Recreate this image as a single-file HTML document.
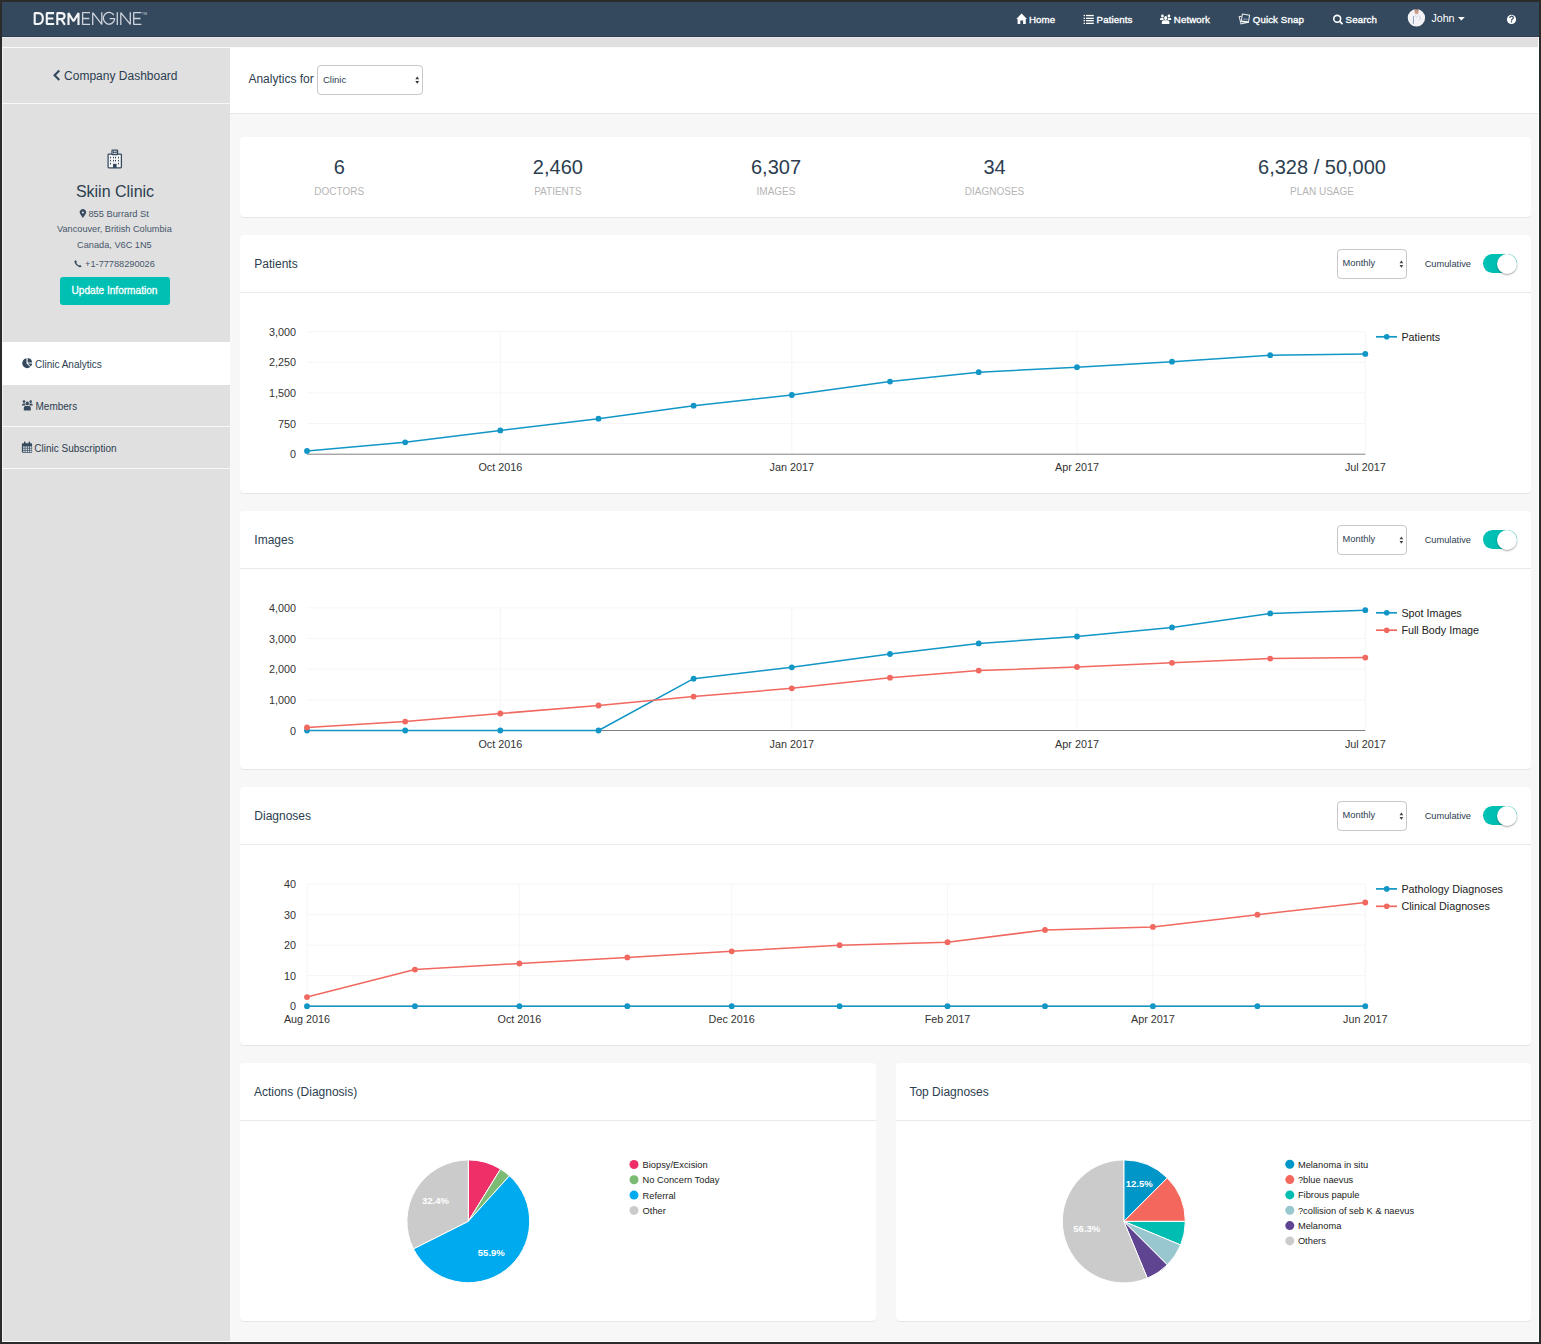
<!DOCTYPE html><html><head><meta charset="utf-8"><style>
*{margin:0;padding:0;box-sizing:border-box}
html,body{width:1541px;height:1344px;overflow:hidden;background:#2b2b2b;font-family:"Liberation Sans",sans-serif}
.t{position:absolute;white-space:nowrap}
.b{position:absolute}
svg{position:absolute;left:0;top:0}
</style></head><body>
<div class="b" style="left:2px;top:2px;width:1537px;height:1340px;background:#f7f7f7;border-right:1px solid #fff;border-bottom:1px solid #fff"></div>
<div class="b" style="left:2px;top:2px;width:1537px;height:35px;background:#34495e;border-bottom:1px solid #2c3e50"></div>
<div class="b" style="left:2px;top:37px;width:1536px;height:10px;background:#e0e0e0;border-top:1px solid #e9e9e9"></div>
<div class="b" style="left:2px;top:47px;width:1536px;height:1px;background:#fafafa"></div>
<div class="b" style="left:2px;top:48px;width:228px;height:1293px;background:#e0e0e0;border-left:1px solid #f0f0f0"></div>
<div class="b" style="left:2px;top:103px;width:228px;height:1px;background:#f8f8f8"></div>
<div class="b" style="left:2px;top:342px;width:228px;height:43px;background:#fff"></div>
<div class="b" style="left:2px;top:426px;width:228px;height:1px;background:#f8f8f8"></div>
<div class="b" style="left:2px;top:468px;width:228px;height:1px;background:#f8f8f8"></div>
<div class="b" style="left:230px;top:48px;width:1308px;height:66px;background:#fff;border-bottom:1px solid #e6e6e6"></div>
<div class="b" style="left:240px;top:137px;width:1291px;height:80px;background:#fff;border-radius:4px;box-shadow:0 1px 0 #e6e6e6"></div>
<div class="b" style="left:240px;top:235px;width:1291px;height:258px;background:#fff;border-radius:4px;box-shadow:0 1px 0 #e6e6e6"></div>
<div class="b" style="left:240px;top:292px;width:1291px;height:1px;background:#e9e9e9"></div>
<div class="b" style="left:240px;top:511px;width:1291px;height:258px;background:#fff;border-radius:4px;box-shadow:0 1px 0 #e6e6e6"></div>
<div class="b" style="left:240px;top:568px;width:1291px;height:1px;background:#e9e9e9"></div>
<div class="b" style="left:240px;top:787px;width:1291px;height:258px;background:#fff;border-radius:4px;box-shadow:0 1px 0 #e6e6e6"></div>
<div class="b" style="left:240px;top:844px;width:1291px;height:1px;background:#e9e9e9"></div>
<div class="b" style="left:240px;top:1063px;width:636px;height:258px;background:#fff;border-radius:4px;box-shadow:0 1px 0 #e6e6e6"></div>
<div class="b" style="left:240px;top:1120px;width:636px;height:1px;background:#e9e9e9"></div>
<div class="b" style="left:896px;top:1063px;width:635px;height:258px;background:#fff;border-radius:4px;box-shadow:0 1px 0 #e6e6e6"></div>
<div class="b" style="left:896px;top:1120px;width:635px;height:1px;background:#e9e9e9"></div>
<div class="t" style="left:248.4px;top:70.84px;font-size:12px;line-height:16.8px;color:#2c3e50;font-weight:normal;">Analytics for</div>
<div class="b" style="left:317px;top:65px;width:106px;height:30px;background:#fff;border:1px solid #c8c8c8;border-radius:4px"></div>
<div class="t" style="left:323px;top:73.26px;font-size:9.5px;line-height:13.3px;color:#2c3e50;font-weight:normal;">Clinic</div>
<div class="t" style="left:39.19999999999999px;width:600px;text-align:center;top:153.07px;font-size:20px;line-height:28.0px;color:#2c3e50;font-weight:normal;">6</div>
<div class="t" style="left:39.19999999999999px;width:600px;text-align:center;top:184.53px;font-size:10px;line-height:14.0px;color:#b5b5b5;font-weight:normal;">DOCTORS</div>
<div class="t" style="left:257.9px;width:600px;text-align:center;top:153.07px;font-size:20px;line-height:28.0px;color:#2c3e50;font-weight:normal;">2,460</div>
<div class="t" style="left:257.9px;width:600px;text-align:center;top:184.53px;font-size:10px;line-height:14.0px;color:#b5b5b5;font-weight:normal;">PATIENTS</div>
<div class="t" style="left:476px;width:600px;text-align:center;top:153.07px;font-size:20px;line-height:28.0px;color:#2c3e50;font-weight:normal;">6,307</div>
<div class="t" style="left:476px;width:600px;text-align:center;top:184.53px;font-size:10px;line-height:14.0px;color:#b5b5b5;font-weight:normal;">IMAGES</div>
<div class="t" style="left:694.5px;width:600px;text-align:center;top:153.07px;font-size:20px;line-height:28.0px;color:#2c3e50;font-weight:normal;">34</div>
<div class="t" style="left:694.5px;width:600px;text-align:center;top:184.53px;font-size:10px;line-height:14.0px;color:#b5b5b5;font-weight:normal;">DIAGNOSES</div>
<div class="t" style="left:1022px;width:600px;text-align:center;top:153.07px;font-size:20px;line-height:28.0px;color:#2c3e50;font-weight:normal;">6,328 / 50,000</div>
<div class="t" style="left:1022px;width:600px;text-align:center;top:184.53px;font-size:10px;line-height:14.0px;color:#b5b5b5;font-weight:normal;">PLAN USAGE</div>
<div class="t" style="left:254.3px;top:256.24px;font-size:12px;line-height:16.8px;color:#2c3e50;font-weight:normal;">Patients</div>
<div class="b" style="left:1337px;top:249px;width:70px;height:30px;background:#fff;border:1px solid #c8c8c8;border-radius:4px"></div>
<div class="t" style="left:1342.6px;top:256.57px;font-size:9.3px;line-height:13.02px;color:#2c3e50;font-weight:normal;">Monthly</div>
<div class="t" style="left:1424.7px;top:258.21px;font-size:9.26px;line-height:12.96px;color:#2c3e50;font-weight:normal;">Cumulative</div>
<div class="b" style="left:1483px;top:254px;width:34px;height:19px;background:#00bfb3;border-radius:10px"></div>
<div class="b" style="left:1497px;top:253.5px;width:20px;height:20.0px;background:#fff;border-radius:50%;box-shadow:0 1px 2px rgba(0,0,0,.35)"></div>
<div class="t" style="left:254.3px;top:532.24px;font-size:12px;line-height:16.8px;color:#2c3e50;font-weight:normal;">Images</div>
<div class="b" style="left:1337px;top:525px;width:70px;height:30px;background:#fff;border:1px solid #c8c8c8;border-radius:4px"></div>
<div class="t" style="left:1342.6px;top:532.57px;font-size:9.3px;line-height:13.02px;color:#2c3e50;font-weight:normal;">Monthly</div>
<div class="t" style="left:1424.7px;top:534.21px;font-size:9.26px;line-height:12.96px;color:#2c3e50;font-weight:normal;">Cumulative</div>
<div class="b" style="left:1483px;top:530px;width:34px;height:19px;background:#00bfb3;border-radius:10px"></div>
<div class="b" style="left:1497px;top:529.5px;width:20px;height:20.0px;background:#fff;border-radius:50%;box-shadow:0 1px 2px rgba(0,0,0,.35)"></div>
<div class="t" style="left:254.3px;top:808.24px;font-size:12px;line-height:16.8px;color:#2c3e50;font-weight:normal;">Diagnoses</div>
<div class="b" style="left:1337px;top:801px;width:70px;height:30px;background:#fff;border:1px solid #c8c8c8;border-radius:4px"></div>
<div class="t" style="left:1342.6px;top:808.57px;font-size:9.3px;line-height:13.02px;color:#2c3e50;font-weight:normal;">Monthly</div>
<div class="t" style="left:1424.7px;top:810.21px;font-size:9.26px;line-height:12.96px;color:#2c3e50;font-weight:normal;">Cumulative</div>
<div class="b" style="left:1483px;top:806px;width:34px;height:19px;background:#00bfb3;border-radius:10px"></div>
<div class="b" style="left:1497px;top:805.5px;width:20px;height:20.0px;background:#fff;border-radius:50%;box-shadow:0 1px 2px rgba(0,0,0,.35)"></div>
<div class="t" style="left:253.9px;top:1084.24px;font-size:12px;line-height:16.8px;color:#2c3e50;font-weight:normal;">Actions (Diagnosis)</div>
<div class="t" style="left:909.4px;top:1084.24px;font-size:12px;line-height:16.8px;color:#2c3e50;font-weight:normal;">Top Diagnoses</div>
<div class="t" style="left:64.1px;top:68.24px;font-size:12px;line-height:16.8px;color:#2c3e50;font-weight:normal;">Company Dashboard</div>
<div class="t" style="left:-185px;width:600px;text-align:center;top:180.66px;font-size:16px;line-height:22.4px;color:#2c3e50;font-weight:normal;">Skiin Clinic</div>
<div class="t" style="left:88.4px;top:207.87px;font-size:9.3px;line-height:13.02px;color:#47566a;font-weight:normal;">855 Burrard St</div>
<div class="t" style="left:-185.6px;width:600px;text-align:center;top:223.17px;font-size:9.2px;line-height:12.88px;color:#47566a;font-weight:normal;">Vancouver, British Columbia</div>
<div class="t" style="left:-185.6px;width:600px;text-align:center;top:239.17px;font-size:9.2px;line-height:12.88px;color:#47566a;font-weight:normal;">Canada, V6C 1N5</div>
<div class="t" style="left:85.1px;top:257.97px;font-size:9.2px;line-height:12.88px;color:#47566a;font-weight:normal;">+1-77788290026</div>
<div class="b" style="left:60px;top:276.5px;width:110px;height:28.0px;background:#00bfb3;border-radius:3px"></div>
<div class="t" style="left:-185.5px;width:600px;text-align:center;top:284.33px;font-size:10.1px;line-height:14.14px;color:#fff;font-weight:normal;-webkit-text-stroke:0.3px #fff">Update Information</div>
<div class="t" style="left:35px;top:357.84px;font-size:10px;line-height:14.0px;color:#2c3e50;font-weight:normal;">Clinic Analytics</div>
<div class="t" style="left:35.5px;top:399.54px;font-size:10px;line-height:14.0px;color:#2c3e50;font-weight:normal;">Members</div>
<div class="t" style="left:34.3px;top:441.54px;font-size:10px;line-height:14.0px;color:#2c3e50;font-weight:normal;">Clinic Subscription</div>
<div class="t" style="left:1028.9px;top:12.85px;font-size:9.7px;line-height:13.58px;color:#fff;font-weight:normal;-webkit-text-stroke:0.35px #fff;letter-spacing:0.1px">Home</div>
<div class="t" style="left:1096.6px;top:12.85px;font-size:9.7px;line-height:13.58px;color:#fff;font-weight:normal;-webkit-text-stroke:0.35px #fff;letter-spacing:0.1px">Patients</div>
<div class="t" style="left:1173.8px;top:12.85px;font-size:9.7px;line-height:13.58px;color:#fff;font-weight:normal;-webkit-text-stroke:0.35px #fff;letter-spacing:0.1px">Network</div>
<div class="t" style="left:1252.8px;top:12.85px;font-size:9.7px;line-height:13.58px;color:#fff;font-weight:normal;-webkit-text-stroke:0.35px #fff;letter-spacing:0.1px">Quick Snap</div>
<div class="t" style="left:1345.6px;top:12.85px;font-size:9.7px;line-height:13.58px;color:#fff;font-weight:normal;-webkit-text-stroke:0.35px #fff;letter-spacing:0.1px">Search</div>
<div class="t" style="left:1431.4px;top:10.70px;font-size:10.7px;line-height:14.98px;color:#fff;font-weight:normal;">John</div>
<svg width="1541" height="1344" viewBox="0 0 1541 1344" font-family="Liberation Sans, sans-serif"><text x="296" y="458.2" font-size="10.8" fill="#333" text-anchor="end">0</text>
<line x1="307.0" y1="423.6" x2="1365.3" y2="423.6" stroke="#f6f6f6" stroke-width="1"/>
<text x="296" y="427.6" font-size="10.8" fill="#333" text-anchor="end">750</text>
<line x1="307.0" y1="392.9" x2="1365.3" y2="392.9" stroke="#f6f6f6" stroke-width="1"/>
<text x="296" y="396.9" font-size="10.8" fill="#333" text-anchor="end">1,500</text>
<line x1="307.0" y1="362.3" x2="1365.3" y2="362.3" stroke="#f6f6f6" stroke-width="1"/>
<text x="296" y="366.3" font-size="10.8" fill="#333" text-anchor="end">2,250</text>
<line x1="307.0" y1="331.7" x2="1365.3" y2="331.7" stroke="#f6f6f6" stroke-width="1"/>
<text x="296" y="335.7" font-size="10.8" fill="#333" text-anchor="end">3,000</text>
<line x1="500.3" y1="331.7" x2="500.3" y2="454.2" stroke="#f6f6f6" stroke-width="1"/>
<line x1="791.8" y1="331.7" x2="791.8" y2="454.2" stroke="#f6f6f6" stroke-width="1"/>
<line x1="1077.0" y1="331.7" x2="1077.0" y2="454.2" stroke="#f6f6f6" stroke-width="1"/>
<line x1="1365.3" y1="331.7" x2="1365.3" y2="454.2" stroke="#f6f6f6" stroke-width="1"/>
<line x1="307.0" y1="454.2" x2="1365.3" y2="454.2" stroke="#808080" stroke-width="1"/>
<text x="500.3" y="471.2" font-size="10.8" fill="#333" text-anchor="middle">Oct 2016</text>
<text x="791.8" y="471.2" font-size="10.8" fill="#333" text-anchor="middle">Jan 2017</text>
<text x="1077.0" y="471.2" font-size="10.8" fill="#333" text-anchor="middle">Apr 2017</text>
<text x="1365.3" y="471.2" font-size="10.8" fill="#333" text-anchor="middle">Jul 2017</text>
<polyline points="307.0,451.0 405.2,442.3 500.3,430.4 598.5,418.7 693.6,405.7 791.8,395.0 890.0,381.6 978.7,372.2 1077.0,367.2 1172.0,361.7 1270.2,355.2 1365.3,353.9" fill="none" stroke="#1196c6" stroke-width="1.5" stroke-linejoin="round"/>
<circle cx="307.0" cy="451.0" r="2.9" fill="#1196c6"/>
<circle cx="405.2" cy="442.3" r="2.9" fill="#1196c6"/>
<circle cx="500.3" cy="430.4" r="2.9" fill="#1196c6"/>
<circle cx="598.5" cy="418.7" r="2.9" fill="#1196c6"/>
<circle cx="693.6" cy="405.7" r="2.9" fill="#1196c6"/>
<circle cx="791.8" cy="395.0" r="2.9" fill="#1196c6"/>
<circle cx="890.0" cy="381.6" r="2.9" fill="#1196c6"/>
<circle cx="978.7" cy="372.2" r="2.9" fill="#1196c6"/>
<circle cx="1077.0" cy="367.2" r="2.9" fill="#1196c6"/>
<circle cx="1172.0" cy="361.7" r="2.9" fill="#1196c6"/>
<circle cx="1270.2" cy="355.2" r="2.9" fill="#1196c6"/>
<circle cx="1365.3" cy="353.9" r="2.9" fill="#1196c6"/>
<line x1="1376" y1="336.8" x2="1397" y2="336.8" stroke="#1196c6" stroke-width="1.7"/>
<circle cx="1386.7" cy="336.8" r="2.8" fill="#1196c6"/>
<text x="1401.4" y="340.8" font-size="10.75" fill="#222">Patients</text>
<text x="296" y="734.5" font-size="10.8" fill="#333" text-anchor="end">0</text>
<line x1="307.0" y1="699.9" x2="1365.3" y2="699.9" stroke="#f6f6f6" stroke-width="1"/>
<text x="296" y="703.9" font-size="10.8" fill="#333" text-anchor="end">1,000</text>
<line x1="307.0" y1="669.2" x2="1365.3" y2="669.2" stroke="#f6f6f6" stroke-width="1"/>
<text x="296" y="673.2" font-size="10.8" fill="#333" text-anchor="end">2,000</text>
<line x1="307.0" y1="638.5" x2="1365.3" y2="638.5" stroke="#f6f6f6" stroke-width="1"/>
<text x="296" y="642.5" font-size="10.8" fill="#333" text-anchor="end">3,000</text>
<line x1="307.0" y1="607.9" x2="1365.3" y2="607.9" stroke="#f6f6f6" stroke-width="1"/>
<text x="296" y="611.9" font-size="10.8" fill="#333" text-anchor="end">4,000</text>
<line x1="500.3" y1="607.9" x2="500.3" y2="730.5" stroke="#f6f6f6" stroke-width="1"/>
<line x1="791.8" y1="607.9" x2="791.8" y2="730.5" stroke="#f6f6f6" stroke-width="1"/>
<line x1="1077.0" y1="607.9" x2="1077.0" y2="730.5" stroke="#f6f6f6" stroke-width="1"/>
<line x1="1365.3" y1="607.9" x2="1365.3" y2="730.5" stroke="#f6f6f6" stroke-width="1"/>
<line x1="307.0" y1="730.5" x2="1365.3" y2="730.5" stroke="#808080" stroke-width="1"/>
<text x="500.3" y="747.5" font-size="10.8" fill="#333" text-anchor="middle">Oct 2016</text>
<text x="791.8" y="747.5" font-size="10.8" fill="#333" text-anchor="middle">Jan 2017</text>
<text x="1077.0" y="747.5" font-size="10.8" fill="#333" text-anchor="middle">Apr 2017</text>
<text x="1365.3" y="747.5" font-size="10.8" fill="#333" text-anchor="middle">Jul 2017</text>
<polyline points="307.0,730.5 405.2,730.5 500.3,730.5 598.5,730.5 693.6,678.7 791.8,667.3 890.0,654.0 978.7,643.4 1077.0,636.5 1172.0,627.4 1270.2,613.4 1365.3,610.2" fill="none" stroke="#1196c6" stroke-width="1.5" stroke-linejoin="round"/>
<circle cx="307.0" cy="730.5" r="2.9" fill="#1196c6"/>
<circle cx="405.2" cy="730.5" r="2.9" fill="#1196c6"/>
<circle cx="500.3" cy="730.5" r="2.9" fill="#1196c6"/>
<circle cx="598.5" cy="730.5" r="2.9" fill="#1196c6"/>
<circle cx="693.6" cy="678.7" r="2.9" fill="#1196c6"/>
<circle cx="791.8" cy="667.3" r="2.9" fill="#1196c6"/>
<circle cx="890.0" cy="654.0" r="2.9" fill="#1196c6"/>
<circle cx="978.7" cy="643.4" r="2.9" fill="#1196c6"/>
<circle cx="1077.0" cy="636.5" r="2.9" fill="#1196c6"/>
<circle cx="1172.0" cy="627.4" r="2.9" fill="#1196c6"/>
<circle cx="1270.2" cy="613.4" r="2.9" fill="#1196c6"/>
<circle cx="1365.3" cy="610.2" r="2.9" fill="#1196c6"/>
<polyline points="307.0,727.5 405.2,721.6 500.3,713.5 598.5,705.5 693.6,696.6 791.8,688.3 890.0,677.7 978.7,670.6 1077.0,667.0 1172.0,662.8 1270.2,658.6 1365.3,657.6" fill="none" stroke="#f0685f" stroke-width="1.5" stroke-linejoin="round"/>
<circle cx="307.0" cy="727.5" r="2.9" fill="#f0685f"/>
<circle cx="405.2" cy="721.6" r="2.9" fill="#f0685f"/>
<circle cx="500.3" cy="713.5" r="2.9" fill="#f0685f"/>
<circle cx="598.5" cy="705.5" r="2.9" fill="#f0685f"/>
<circle cx="693.6" cy="696.6" r="2.9" fill="#f0685f"/>
<circle cx="791.8" cy="688.3" r="2.9" fill="#f0685f"/>
<circle cx="890.0" cy="677.7" r="2.9" fill="#f0685f"/>
<circle cx="978.7" cy="670.6" r="2.9" fill="#f0685f"/>
<circle cx="1077.0" cy="667.0" r="2.9" fill="#f0685f"/>
<circle cx="1172.0" cy="662.8" r="2.9" fill="#f0685f"/>
<circle cx="1270.2" cy="658.6" r="2.9" fill="#f0685f"/>
<circle cx="1365.3" cy="657.6" r="2.9" fill="#f0685f"/>
<line x1="1376" y1="612.8" x2="1397" y2="612.8" stroke="#1196c6" stroke-width="1.7"/>
<circle cx="1386.7" cy="612.8" r="2.8" fill="#1196c6"/>
<text x="1401.4" y="616.8" font-size="10.75" fill="#222">Spot Images</text>
<line x1="1376" y1="630.2" x2="1397" y2="630.2" stroke="#f0685f" stroke-width="1.7"/>
<circle cx="1386.7" cy="630.2" r="2.8" fill="#f0685f"/>
<text x="1401.4" y="634.2" font-size="10.75" fill="#222">Full Body Image</text>
<text x="296" y="1010.2" font-size="10.8" fill="#333" text-anchor="end">0</text>
<line x1="307.0" y1="975.7" x2="1365.3" y2="975.7" stroke="#f6f6f6" stroke-width="1"/>
<text x="296" y="979.7" font-size="10.8" fill="#333" text-anchor="end">10</text>
<line x1="307.0" y1="945.2" x2="1365.3" y2="945.2" stroke="#f6f6f6" stroke-width="1"/>
<text x="296" y="949.2" font-size="10.8" fill="#333" text-anchor="end">20</text>
<line x1="307.0" y1="914.7" x2="1365.3" y2="914.7" stroke="#f6f6f6" stroke-width="1"/>
<text x="296" y="918.7" font-size="10.8" fill="#333" text-anchor="end">30</text>
<line x1="307.0" y1="884.2" x2="1365.3" y2="884.2" stroke="#f6f6f6" stroke-width="1"/>
<text x="296" y="888.2" font-size="10.8" fill="#333" text-anchor="end">40</text>
<line x1="307.0" y1="884.2" x2="307.0" y2="1006.2" stroke="#f6f6f6" stroke-width="1"/>
<line x1="519.4" y1="884.2" x2="519.4" y2="1006.2" stroke="#f6f6f6" stroke-width="1"/>
<line x1="731.7" y1="884.2" x2="731.7" y2="1006.2" stroke="#f6f6f6" stroke-width="1"/>
<line x1="947.5" y1="884.2" x2="947.5" y2="1006.2" stroke="#f6f6f6" stroke-width="1"/>
<line x1="1152.9" y1="884.2" x2="1152.9" y2="1006.2" stroke="#f6f6f6" stroke-width="1"/>
<line x1="1365.3" y1="884.2" x2="1365.3" y2="1006.2" stroke="#f6f6f6" stroke-width="1"/>
<line x1="307.0" y1="1006.2" x2="1365.3" y2="1006.2" stroke="#808080" stroke-width="1"/>
<text x="307.0" y="1023.2" font-size="10.8" fill="#333" text-anchor="middle">Aug 2016</text>
<text x="519.4" y="1023.2" font-size="10.8" fill="#333" text-anchor="middle">Oct 2016</text>
<text x="731.7" y="1023.2" font-size="10.8" fill="#333" text-anchor="middle">Dec 2016</text>
<text x="947.5" y="1023.2" font-size="10.8" fill="#333" text-anchor="middle">Feb 2017</text>
<text x="1152.9" y="1023.2" font-size="10.8" fill="#333" text-anchor="middle">Apr 2017</text>
<text x="1365.3" y="1023.2" font-size="10.8" fill="#333" text-anchor="middle">Jun 2017</text>
<polyline points="307.0,997.1 414.9,969.6 519.4,963.5 627.3,957.4 731.7,951.3 839.6,945.2 947.5,942.2 1045.0,930.0 1152.9,926.9 1257.4,914.7 1365.3,902.5" fill="none" stroke="#f0685f" stroke-width="1.5" stroke-linejoin="round"/>
<circle cx="307.0" cy="997.1" r="2.9" fill="#f0685f"/>
<circle cx="414.9" cy="969.6" r="2.9" fill="#f0685f"/>
<circle cx="519.4" cy="963.5" r="2.9" fill="#f0685f"/>
<circle cx="627.3" cy="957.4" r="2.9" fill="#f0685f"/>
<circle cx="731.7" cy="951.3" r="2.9" fill="#f0685f"/>
<circle cx="839.6" cy="945.2" r="2.9" fill="#f0685f"/>
<circle cx="947.5" cy="942.2" r="2.9" fill="#f0685f"/>
<circle cx="1045.0" cy="930.0" r="2.9" fill="#f0685f"/>
<circle cx="1152.9" cy="926.9" r="2.9" fill="#f0685f"/>
<circle cx="1257.4" cy="914.7" r="2.9" fill="#f0685f"/>
<circle cx="1365.3" cy="902.5" r="2.9" fill="#f0685f"/>
<polyline points="307.0,1006.2 414.9,1006.2 519.4,1006.2 627.3,1006.2 731.7,1006.2 839.6,1006.2 947.5,1006.2 1045.0,1006.2 1152.9,1006.2 1257.4,1006.2 1365.3,1006.2" fill="none" stroke="#1196c6" stroke-width="1.5" stroke-linejoin="round"/>
<circle cx="307.0" cy="1006.2" r="2.9" fill="#1196c6"/>
<circle cx="414.9" cy="1006.2" r="2.9" fill="#1196c6"/>
<circle cx="519.4" cy="1006.2" r="2.9" fill="#1196c6"/>
<circle cx="627.3" cy="1006.2" r="2.9" fill="#1196c6"/>
<circle cx="731.7" cy="1006.2" r="2.9" fill="#1196c6"/>
<circle cx="839.6" cy="1006.2" r="2.9" fill="#1196c6"/>
<circle cx="947.5" cy="1006.2" r="2.9" fill="#1196c6"/>
<circle cx="1045.0" cy="1006.2" r="2.9" fill="#1196c6"/>
<circle cx="1152.9" cy="1006.2" r="2.9" fill="#1196c6"/>
<circle cx="1257.4" cy="1006.2" r="2.9" fill="#1196c6"/>
<circle cx="1365.3" cy="1006.2" r="2.9" fill="#1196c6"/>
<line x1="1376" y1="888.9" x2="1397" y2="888.9" stroke="#1196c6" stroke-width="1.7"/>
<circle cx="1386.7" cy="888.9" r="2.8" fill="#1196c6"/>
<text x="1401.4" y="892.9" font-size="10.75" fill="#222">Pathology Diagnoses</text>
<line x1="1376" y1="906.3" x2="1397" y2="906.3" stroke="#f0685f" stroke-width="1.7"/>
<circle cx="1386.7" cy="906.3" r="2.8" fill="#f0685f"/>
<text x="1401.4" y="910.3" font-size="10.75" fill="#222">Clinical Diagnoses</text>
<path d="M468.3,1221.3 L468.30,1159.90 A61.4,61.4 0 0 1 500.55,1169.05 Z" fill="#ee2f68" stroke="#fff" stroke-width="1" stroke-linejoin="round"/>
<path d="M468.3,1221.3 L500.55,1169.05 A61.4,61.4 0 0 1 509.48,1175.76 Z" fill="#7cbb74" stroke="#fff" stroke-width="1" stroke-linejoin="round"/>
<path d="M468.3,1221.3 L509.48,1175.76 A61.4,61.4 0 1 1 413.42,1248.83 Z" fill="#00aaee" stroke="#fff" stroke-width="1" stroke-linejoin="round"/>
<path d="M468.3,1221.3 L413.42,1248.83 A61.4,61.4 0 0 1 468.30,1159.90 Z" fill="#cbcbcb" stroke="#fff" stroke-width="1" stroke-linejoin="round"/>
<text x="435.5" y="1204.3" font-size="9.5" font-weight="bold" fill="#fff" text-anchor="middle">32.4%</text>
<text x="491.3" y="1256" font-size="9.5" font-weight="bold" fill="#fff" text-anchor="middle">55.9%</text>
<circle cx="634" cy="1164.5" r="4.5" fill="#ee2f68"/>
<text x="642.6" y="1167.9" font-size="9.3" fill="#222">Biopsy/Excision</text>
<circle cx="634" cy="1179.8" r="4.5" fill="#7cbb74"/>
<text x="642.6" y="1183.2" font-size="9.3" fill="#222">No Concern Today</text>
<circle cx="634" cy="1195.1" r="4.5" fill="#00aaee"/>
<text x="642.6" y="1198.5" font-size="9.3" fill="#222">Referral</text>
<circle cx="634" cy="1210.4" r="4.5" fill="#cbcbcb"/>
<text x="642.6" y="1213.8" font-size="9.3" fill="#222">Other</text>
<path d="M1123.8,1221.4 L1123.80,1159.90 A61.5,61.5 0 0 1 1167.29,1177.91 Z" fill="#0096c8" stroke="#fff" stroke-width="1" stroke-linejoin="round"/>
<path d="M1123.8,1221.4 L1167.29,1177.91 A61.5,61.5 0 0 1 1185.30,1221.40 Z" fill="#f4675d" stroke="#fff" stroke-width="1" stroke-linejoin="round"/>
<path d="M1123.8,1221.4 L1185.30,1221.40 A61.5,61.5 0 0 1 1180.62,1244.94 Z" fill="#00bdb2" stroke="#fff" stroke-width="1" stroke-linejoin="round"/>
<path d="M1123.8,1221.4 L1180.62,1244.94 A61.5,61.5 0 0 1 1167.29,1264.89 Z" fill="#98c7d0" stroke="#fff" stroke-width="1" stroke-linejoin="round"/>
<path d="M1123.8,1221.4 L1167.29,1264.89 A61.5,61.5 0 0 1 1147.34,1278.22 Z" fill="#5e4491" stroke="#fff" stroke-width="1" stroke-linejoin="round"/>
<path d="M1123.8,1221.4 L1147.34,1278.22 A61.5,61.5 0 1 1 1123.80,1159.90 Z" fill="#cbcbcb" stroke="#fff" stroke-width="1" stroke-linejoin="round"/>
<text x="1139.2" y="1187" font-size="9.5" font-weight="bold" fill="#fff" text-anchor="middle">12.5%</text>
<text x="1086.8" y="1232" font-size="9.5" font-weight="bold" fill="#fff" text-anchor="middle">56.3%</text>
<circle cx="1289.8" cy="1164.3" r="4.5" fill="#0096c8"/>
<text x="1297.9" y="1167.7" font-size="9.3" fill="#222">Melanoma in situ</text>
<circle cx="1289.8" cy="1179.6" r="4.5" fill="#f4675d"/>
<text x="1297.9" y="1183.0" font-size="9.3" fill="#222">?blue naevus</text>
<circle cx="1289.8" cy="1194.9" r="4.5" fill="#00bdb2"/>
<text x="1297.9" y="1198.3" font-size="9.3" fill="#222">Fibrous papule</text>
<circle cx="1289.8" cy="1210.3" r="4.5" fill="#98c7d0"/>
<text x="1297.9" y="1213.7" font-size="9.3" fill="#222">?collision of seb K &amp; naevus</text>
<circle cx="1289.8" cy="1225.6" r="4.5" fill="#5e4491"/>
<text x="1297.9" y="1229.0" font-size="9.3" fill="#222">Melanoma</text>
<circle cx="1289.8" cy="1240.9" r="4.5" fill="#cbcbcb"/>
<text x="1297.9" y="1244.3" font-size="9.3" fill="#222">Others</text>
<g fill="none" stroke="#f4f5f7" stroke-width="2.1" stroke-linejoin="bevel"><path d="M34.7,13.1 H38.4 Q42.8,13.1 42.8,18.6 Q42.8,24 38.4,24 H34.7 Z"/><path d="M54.1,13.1 H46.8 V24 H54.2 M46.8,18.5 H53.4"/><path d="M57.3,25 V13.1 H61.3 Q64.6,13.1 64.6,16.1 Q64.6,19.1 61.3,19.1 H57.3 M61.2,19.1 L64.9,24.9"/><path d="M68.5,25 V13.1 L73.5,21.2 L78.5,13.1 V25"/></g>
<g fill="none" stroke="#cfd4db" stroke-width="1.3" stroke-linejoin="bevel"><path d="M90,12.7 H82.6 V24.4 H90.1 M82.6,18.5 H89.3"/><path d="M92.7,25 V12.7 L101.8,24.4 V12.2"/><path d="M113.9,15.1 A5.7,5.9 0 1 0 114.7,19 V18.7 H109.6"/><path d="M117.3,12.2 V25"/><path d="M120.8,25 V12.7 L130.3,24.4 V12.2"/><path d="M141.3,12.7 H133.7 V24.4 H141.4 M133.7,18.5 H140.6"/></g>
<text x="141.8" y="14.6" font-size="3.6" fill="#c9cfd6">TM</text>
<path d="M1021.6,13.5 L1027,18.9 H1025.8 V24 H1023.1 V20.5 H1020.3 V24 H1017.6 V18.9 H1016.3 Z" fill="#fff"/>
<g fill="#fff"><rect x="1083.6" y="14.9" width="1.4" height="1.3"/><rect x="1086" y="14.9" width="7.8" height="1.3"/><rect x="1083.6" y="17.7" width="1.4" height="1.3"/><rect x="1086" y="17.7" width="7.8" height="1.3"/><rect x="1083.6" y="20.0" width="1.4" height="1.3"/><rect x="1086" y="20.0" width="7.8" height="1.3"/><rect x="1083.6" y="22.7" width="1.4" height="1.3"/><rect x="1086" y="22.7" width="7.8" height="1.3"/></g>
<g fill="#fff"><circle cx="1162.4" cy="15.9" r="1.35"/><circle cx="1168.9" cy="15.9" r="1.35"/><path d="M1159.9,20 Q1159.9,17.8 1161.6,17.8 H1163.6 Q1163.2,18.9 1163.6,20 Z"/><path d="M1171.4,20 Q1171.4,17.8 1169.7,17.8 H1167.7 Q1168.1,18.9 1167.7,20 Z"/><ellipse cx="1165.6" cy="18" rx="1.5" ry="1.9"/><path d="M1161.8,24.1 V22.1 Q1161.8,20.3 1163.5,20.3 H1167.7 Q1169.4,20.3 1169.4,22.1 V24.1 Z"/></g>
<g fill="none" stroke="#e6e8ec" stroke-width="1.05"><path d="M1242.4,14.1 L1249.6,15.2 L1248.4,22.5 L1241.2,21.4 Z"/><path d="M1241.6,16.2 L1239.2,16.7 L1241,23.8 L1247.5,22.6"/></g><path d="M1242.9,19.9 L1244.6,17.6 L1246,19 L1247,18.2 L1248.3,20.6 Z" fill="#6f8194"/><path d="M1241.6,20.5 L1248.6,21.4 L1248.3,23 L1241.3,22.1 Z" fill="#fff"/>
<g fill="none" stroke="#fff" stroke-width="1.55"><circle cx="1337.2" cy="18.8" r="3.45"/><path d="M1339.8,21.4 L1342,23.6" stroke-linecap="round" stroke-width="1.8"/></g>
<clipPath id="av"><circle cx="1416.4" cy="17.8" r="8.7"/></clipPath><g clip-path="url(#av)"><rect x="1407" y="9" width="19" height="18" fill="#f4f2f4"/><ellipse cx="1416.6" cy="11.6" rx="2.1" ry="2.6" fill="#c9a08c"/><path d="M1414.5,9.6 Q1416.6,8.2 1418.7,9.8 L1418.6,10.6 Q1416.6,9.6 1414.6,10.6 Z" fill="#8c6a58"/><path d="M1413.6,16 L1413.3,24" stroke="#7f9cc0" stroke-width="0.9"/><path d="M1415,14.6 L1416.6,17.5 L1418.3,14.6" stroke="#c9ccd6" stroke-width="0.6" fill="none"/><path d="M1419.2,15.5 Q1420.6,17 1420,20" stroke="#a9b6c8" stroke-width="0.6" fill="none"/></g>
<path d="M1458,16.9 H1464.8 L1461.4,20.6 Z" fill="#fff"/>
<circle cx="1511.5" cy="19.4" r="4.6" fill="#fff"/><path d="M1509.8,18.1 Q1509.8,16.2 1511.6,16.2 Q1513.3,16.2 1513.3,17.7 Q1513.3,18.6 1512.3,19.1 Q1511.5,19.5 1511.5,20.4" fill="none" stroke="#34495e" stroke-width="1.2"/><circle cx="1511.5" cy="21.7" r="0.75" fill="#34495e"/>
<path d="M59.3,70.6 L54.6,75.3 L59.3,80" fill="none" stroke="#34495e" stroke-width="2.1"/>
<g fill="#f6f6f6" stroke="#34495e" stroke-width="1.25"><rect x="108.1" y="154" width="13.3" height="13.9" rx="0.8"/><rect x="112" y="150" width="5.6" height="4.6" rx="0.6"/></g><g fill="#34495e"><rect x="113.2" y="150.9" width="0.9" height="2.8"/><rect x="115.6" y="150.9" width="0.9" height="2.8"/><rect x="113.2" y="151.9" width="3.3" height="0.9"/><rect x="110" y="156.8" width="1" height="1.5"/><rect x="110" y="159.9" width="1" height="1.5"/><rect x="113" y="156.8" width="1" height="1.5"/><rect x="113" y="159.9" width="1" height="1.5"/><rect x="115" y="156.8" width="1" height="1.5"/><rect x="115" y="159.9" width="1" height="1.5"/><rect x="118" y="156.8" width="1" height="1.5"/><rect x="118" y="159.9" width="1" height="1.5"/><rect x="110" y="162.9" width="1" height="1.5"/><rect x="118" y="162.9" width="1" height="1.5"/><rect x="113" y="163.8" width="3.6" height="4.1"/></g>
<path d="M82.9,217.9 L80.4,214.2 A3.15,3.15 0 1 1 85.4,214.2 Z" fill="#34495e"/><circle cx="82.9" cy="212.5" r="1.1" fill="#e0e0e0"/>
<path d="M75.2,260.2 Q74.3,261 74.5,262.5 Q75.6,265.8 79.5,267.3 Q80.9,267.5 81.6,266.5 L80.3,264.9 L78.9,265.6 Q76.9,264.5 76.2,262.6 L77,261.3 Z" fill="#34495e"/>
<path d="M26.5,358.2 V363.4 L30.4,367 A5,5 0 1 1 26.5,358.2 Z" fill="#34495e"/><path d="M27.6,358.1 A5,5 0 0 1 32.2,362.6 H27.6 Z" fill="#34495e"/><path d="M27.9,363.6 H32.1 A5,5 0 0 1 30.9,366.5 Z" fill="#34495e"/>
<g fill="#34495e"><circle cx="24" cy="401.6" r="1.3"/><circle cx="30.7" cy="401.6" r="1.3"/><path d="M21.9,405.6 Q21.9,403.4 23.6,403.4 H25.4 Q25.1,404.5 25.4,405.6 Z"/><path d="M32.8,405.6 Q32.8,403.4 31.1,403.4 H29.3 Q29.6,404.5 29.3,405.6 Z"/><ellipse cx="27.3" cy="403.4" rx="1.6" ry="1.9"/><path d="M23.8,410.5 V408 Q23.8,406.1 25.5,406.1 H29.1 Q30.8,406.1 30.8,408 V410.5 Z"/></g>
<g><rect x="21.9" y="443.2" width="10.2" height="9.5" rx="0.9" fill="#34495e"/><rect x="23.1" y="446.4" width="1.6" height="1.4" fill="#dde1e6"/><rect x="23.1" y="448.5" width="1.6" height="1.4" fill="#dde1e6"/><rect x="23.1" y="450.6" width="1.6" height="1.4" fill="#dde1e6"/><rect x="25.4" y="446.4" width="1.6" height="1.4" fill="#dde1e6"/><rect x="25.4" y="448.5" width="1.6" height="1.4" fill="#dde1e6"/><rect x="25.4" y="450.6" width="1.6" height="1.4" fill="#dde1e6"/><rect x="27.7" y="446.4" width="1.6" height="1.4" fill="#dde1e6"/><rect x="27.7" y="448.5" width="1.6" height="1.4" fill="#dde1e6"/><rect x="27.7" y="450.6" width="1.6" height="1.4" fill="#dde1e6"/><rect x="30.0" y="446.4" width="1.6" height="1.4" fill="#dde1e6"/><rect x="30.0" y="448.5" width="1.6" height="1.4" fill="#dde1e6"/><rect x="30.0" y="450.6" width="1.6" height="1.4" fill="#dde1e6"/><rect x="24" y="441.6" width="1.5" height="2.8" rx="0.5" fill="#34495e"/><rect x="28.6" y="441.6" width="1.5" height="2.8" rx="0.5" fill="#34495e"/></g>
<path d="M415.3,79.2 L417.2,76.4 L419.09999999999997,79.2 Z M415.3,81.0 L417.2,83.8 L419.09999999999997,81.0 Z" fill="#333"/>
<path d="M1399.5,263.2 L1401.4,260.4 L1403.3000000000002,263.2 Z M1399.5,264.9 L1401.4,267.7 L1403.3000000000002,264.9 Z" fill="#444"/>
<path d="M1399.5,539.2 L1401.4,536.4000000000001 L1403.3000000000002,539.2 Z M1399.5,540.9000000000001 L1401.4,543.7 L1403.3000000000002,540.9000000000001 Z" fill="#444"/>
<path d="M1399.5,815.2 L1401.4,812.4000000000001 L1403.3000000000002,815.2 Z M1399.5,816.9000000000001 L1401.4,819.7 L1403.3000000000002,816.9000000000001 Z" fill="#444"/></svg>
</body></html>
